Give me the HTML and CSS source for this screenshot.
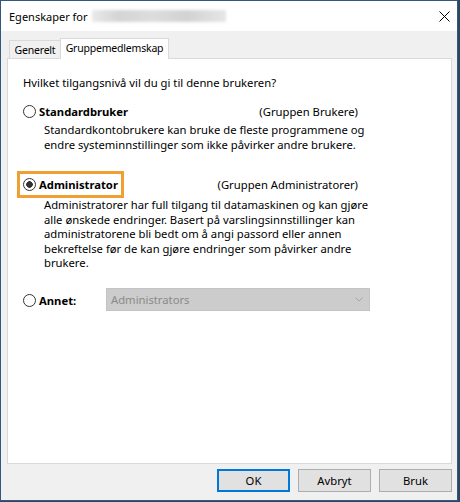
FILE: index.html
```html
<!DOCTYPE html>
<html lang="no">
<head>
    <meta charset="UTF-8">
    <meta name="viewport" content="width=device-width, initial-scale=1.0">
    <title>Egenskaper for</title>
    <link rel="stylesheet" href="styles.css">
</head>
<body>

<div class="window">
    <div class="titlebar">
        <span class="title">Egenskaper for</span>
        <span class="blurred-name"></span>
        <svg class="close" width="11" height="11" viewBox="0 0 11 11">
            <path d="M0.5 0.5 L10.5 10.5 M10.5 0.5 L0.5 10.5" stroke="#000" stroke-width="1" fill="none"/>
        </svg>
    </div>

    <div class="tabs">
        <div class="tab">Generelt</div>
        <div class="tab active">Gruppemedlemskap</div>
    </div>

    <div class="panel">
        <p class="question">Hvilket tilgangsnivå vil du gi til denne brukeren?</p>

        <div class="option-head first">
            <span class="radio-label"><span class="radio"></span>Standardbruker</span>
            <span class="group">(Gruppen Brukere)</span>
        </div>
        <p class="desc first-desc">
            Standardkontobrukere kan bruke de fleste programmene og<br>
            endre systeminnstillinger som ikke påvirker andre brukere.
        </p>

        <div class="option-head second">
            <span class="radio-label highlight"><span class="radio checked"></span>Administrator</span>
            <span class="group">(Gruppen Administratorer)</span>
        </div>
        <p class="desc second-desc">
            Administratorer har full tilgang til datamaskinen og kan gjøre<br>
            alle ønskede endringer. Basert på varslingsinnstillinger kan<br>
            administratorene bli bedt om å angi passord eller annen<br>
            bekreftelse før de kan gjøre endringer som påvirker andre<br>
            brukere.
        </p>

        <div class="other-row">
            <span class="radio-label other-label"><span class="radio"></span>Annet:</span>
            <div class="select disabled">
                <span>Administrators</span>
                <svg width="8" height="5" viewBox="0 0 8 5">
                    <polyline points="0.5,0.5 4,4 7.5,0.5" stroke="#a6a6a6" stroke-width="1" fill="none"/>
                </svg>
            </div>
        </div>
    </div>

    <div class="button-row">
        <button class="default">OK</button>
        <button>Avbryt</button>
        <button>Bruk</button>
    </div>
</div>

</body>
</html>
```

FILE: styles.css
```css
body {
    margin: 0;
    background: #2a4764;
    font-family: "Noto Sans", sans-serif;
    font-size: 11.25px;
    color: #000;
}
.window {
    box-sizing: border-box;
    width: 458px;
    height: 501px;
    border: 1px solid #34577a;
    background: #f0f0f0;
}
.titlebar {
    height: 30px;
    background: #fff;
    display: flex;
    align-items: center;
    padding-left: 8px;
}
.title {
    font-size: 11px;
}
.blurred-name {
    width: 134px;
    height: 12px;
    margin-left: 4px;
    background: linear-gradient(to right, #e9e9e9, #d4d4d4 20%, #dddddd 45%, #d2d2d2 70%, #e6e6e6);
    filter: blur(1.5px);
}
.close {
    margin-left: auto;
    margin-right: 7px;
}
.tabs {
    display: flex;
    align-items: flex-end;
    height: 20px;
    margin: 7px 0 0 8px;
}
.tab {
    box-sizing: border-box;
    height: 18px;
    width: 51px;
    border: 1px solid #d9d9d9;
    border-bottom: none;
    border-right: none;
    display: flex;
    align-items: center;
    justify-content: center;
    padding-top: 1px;
    font-size: 10.5px;
    letter-spacing: -0.2px;
}
.tab.active {
    position: relative;
    z-index: 1;
    height: 21px;
    width: 109px;
    margin-bottom: -1px;
    background: #fff;
    border-right: 1px solid #d9d9d9;
    padding-top: 0;
    padding-bottom: 2px;
}
.panel {
    box-sizing: border-box;
    height: 406px;
    margin: 0 5px 0 6px;
    border: 1px solid #d9d9d9;
    background: #fff;
    padding: 16px 0 0 15px;
}
.question {
    margin: 0;
    line-height: 15px;
}
.option-head {
    display: flex;
    justify-content: space-between;
    align-items: center;
    width: 335px;
    height: 15px;
}
.option-head.first {
    margin-top: 14px;
}
.option-head.second {
    margin-top: 25px;
}
.radio-label {
    display: flex;
    align-items: center;
    font-weight: bold;
}
.radio {
    box-sizing: border-box;
    width: 13px;
    height: 13px;
    margin-right: 3px;
    border: 1px solid #333;
    border-radius: 50%;
    background: #fff;
}
.radio.checked {
    background: radial-gradient(circle, #333 0 3px, #fff 3.6px);
}
.highlight {
    outline: 3px solid #f0a030;
    outline-offset: 3px;
}
.desc {
    margin: 0 0 0 21px;
    line-height: 14.5px;
}
.first-desc {
    margin-top: 4px;
}
.second-desc {
    margin-top: 6px;
}
.other-row {
    display: flex;
    align-items: center;
    margin-top: 17px;
}
.other-label {
    width: 83px;
    padding-top: 2px;
}
.select {
    box-sizing: border-box;
    width: 264px;
    height: 23px;
    display: flex;
    align-items: center;
    justify-content: space-between;
    padding: 0 6px 0 4px;
    border: 1px solid #c4c4c4;
}
.select.disabled {
    background: #cccccc;
    color: #8a8a8a;
}
.button-row {
    display: flex;
    justify-content: flex-end;
    gap: 8px;
    margin: 5px 5px 0 0;
}
.button-row button {
    box-sizing: border-box;
    width: 73px;
    height: 23px;
    padding: 0;
    font-family: "Noto Sans", sans-serif;
    font-size: 11.25px;
    color: #000;
    background: #e1e1e1;
    border: 1px solid #adadad;
}
.button-row button.default {
    border: 2px solid #0078d7;
}
```
